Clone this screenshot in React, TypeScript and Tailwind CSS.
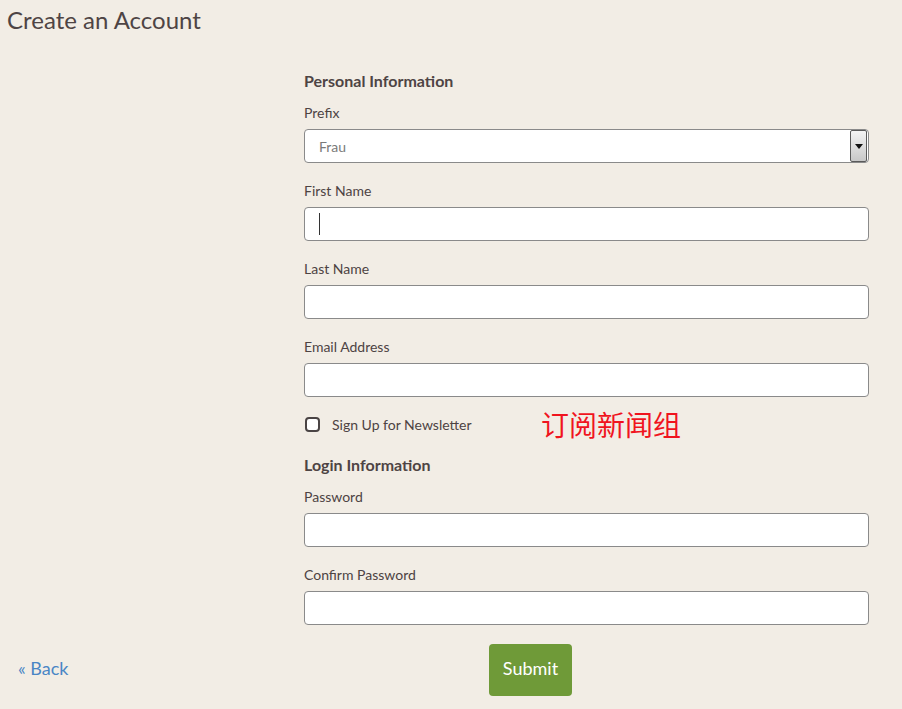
import React from "react";

const font = { fontFamily: "Lato, 'Noto Sans', sans-serif" };

function Label({ children }: { children: React.ReactNode }) {
  return <div className="h-5 leading-5 text-[14px] text-[#4d4343]">{children}</div>;
}

function TextInput({ caret = false }: { caret?: boolean }) {
  return (
    <div className="relative mt-[6px] h-[34px] w-full rounded-[4px] border border-[#8a8a8a] bg-white">
      {caret && <span className="absolute left-[14px] top-[5px] h-[22px] w-px bg-[#333]" />}
    </div>
  );
}

export default function App() {
  return (
    <div className="min-h-[709px] w-full bg-[#f2ede5] text-[#4d4343]" style={font}>
      <h1 className="h-10 pl-[7px] text-[24px] leading-10 font-normal text-[#4e4444]">Create an Account</h1>

      <div className="ml-[304px] mt-[29px] w-[565px]">
        <div className="h-6 leading-6 text-[16px] font-bold text-[#4e4444]">Personal Information</div>

        <div className="mt-[10px]">
          <Label>Prefix</Label>
          <div className="mt-[6px] flex h-[34px] w-full items-center rounded-[4px] border border-[#8a8a8a] bg-white pl-[14px] pr-px">
            <span className="flex-1 text-[14px] text-[#7a7a7a]">Frau</span>
            <div className="flex h-[32px] w-[17px] items-center justify-center rounded-[2px] border border-[#5a5a5a] bg-gradient-to-b from-[#f4f4f4] to-[#c8c8c8]">
              <svg width="8" height="5" viewBox="0 0 8 5">
                <path d="M0 0 L8 0 L4 5 Z" fill="#111" />
              </svg>
            </div>
          </div>
        </div>

        <div className="mt-[18px]">
          <Label>First Name</Label>
          <TextInput caret />
        </div>
        <div className="mt-[18px]">
          <Label>Last Name</Label>
          <TextInput />
        </div>
        <div className="mt-[18px]">
          <Label>Email Address</Label>
          <TextInput />
        </div>

        <div className="mt-[17px] flex h-5 items-center">
          <div className="flex w-[237px] items-center">
            <span className="ml-px h-[15px] w-[15px] rounded-[4px] border-2 border-[#4a4444] bg-white" />
            <span className="ml-[12px] text-[14px] text-[#4d4343]">Sign Up for Newsletter</span>
          </div>
          <span
            className="text-[28px] leading-none text-[#f0141e]"
            style={{ fontFamily: "'Noto Sans CJK SC', sans-serif" }}
          >
            订阅新闻组
          </span>
        </div>

        <div className="mt-[19px] h-6 leading-6 text-[16px] font-bold text-[#4e4444]">Login Information</div>

        <div className="mt-[10px]">
          <Label>Password</Label>
          <TextInput />
        </div>
        <div className="mt-[18px]">
          <Label>Confirm Password</Label>
          <TextInput />
        </div>
      </div>

      <div className="mt-[19px] flex items-center">
        <div className="w-[489px] pb-[4px] pl-[18px]">
          <a className="text-[18px] text-[#4a86c5]" href="#">« Back</a>
        </div>
        <button className="h-[52px] w-[83px] rounded-[4px] bg-[#6f9a38] pb-[4px] text-[18px] text-white">Submit</button>
      </div>
    </div>
  );
}
